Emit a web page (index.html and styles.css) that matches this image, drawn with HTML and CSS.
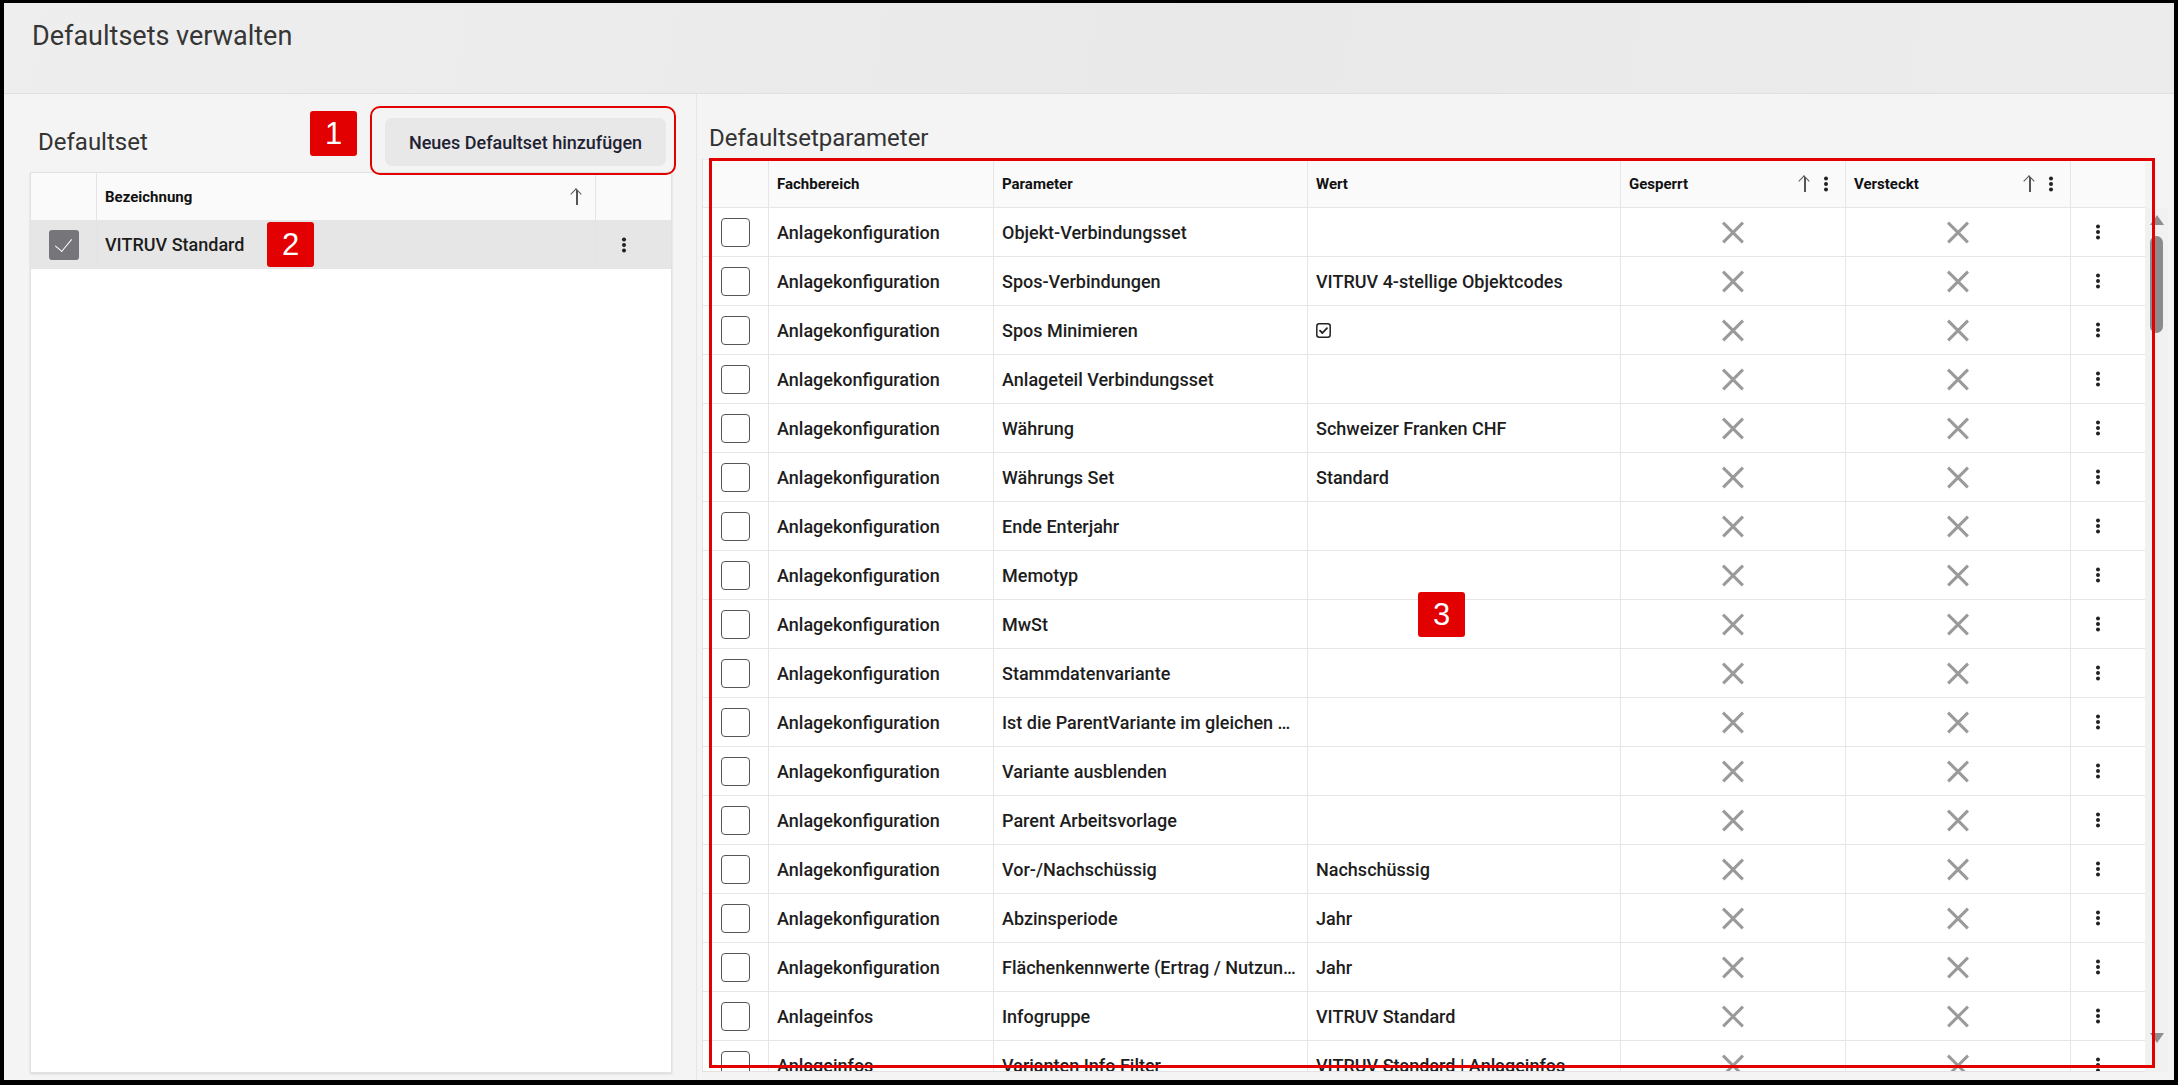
FILE: index.html
```html
<!DOCTYPE html>
<html lang="de">

<head>
    <meta charset="UTF-8">
    <meta name="viewport" content="width=device-width, initial-scale=1.0">
    <title>Defaultsets verwalten</title>
    <link rel="stylesheet" href="styles.css">
</head>

<body>
    <div class="app">
        <header class="topbar">
            <h1>Defaultsets verwalten</h1>
        </header>

        <main class="content">
            <!-- linke Seite: Defaultsets -->
            <section class="panel-left">
                <div class="panel-head">
                    <h2>Defaultset</h2>
                    <button class="btn">Neues Defaultset hinzufügen</button>
                </div>
                <div class="sets">
                    <div class="sets-row sets-head">
                        <div class="scell"></div>
                        <div class="scell">Bezeichnung <span class="sort"></span></div>
                        <div class="scell"></div>
                    </div>
                    <div class="sets-row selected">
                        <div class="scell c-check"><span class="box checked"></span></div>
                        <div class="scell name">VITRUV Standard</div>
                        <div class="scell c-menu"><span class="kebab"></span></div>
                    </div>
                </div>
            </section>

            <!-- rechte Seite: Parameter -->
            <section class="panel-right">
                <h2>Defaultsetparameter</h2>
                <div class="params">
                    <div class="prow params-head">
                        <div class="pcell"></div>
                        <div class="pcell">Fachbereich</div>
                        <div class="pcell">Parameter</div>
                        <div class="pcell">Wert</div>
                        <div class="pcell">Gesperrt <span class="head-tools"><span class="sort"></span><span class="kebab"></span></span></div>
                        <div class="pcell">Versteckt <span class="head-tools"><span class="sort"></span><span class="kebab"></span></span></div>
                        <div class="pcell"></div>
                    </div>
                    <div class="params-body">
                        <div class="params-rows">
                            <div class="prow">
                                <div class="pcell c-check"><span class="box"></span></div>
                                <div class="pcell">Anlagekonfiguration</div>
                                <div class="pcell">Objekt-Verbindungsset</div>
                                <div class="pcell"></div>
                                <div class="pcell c-icon"><span class="cross"></span></div>
                                <div class="pcell c-icon"><span class="cross"></span></div>
                                <div class="pcell c-menu"><span class="kebab"></span></div>
                            </div>
                            <div class="prow">
                                <div class="pcell c-check"><span class="box"></span></div>
                                <div class="pcell">Anlagekonfiguration</div>
                                <div class="pcell">Spos-Verbindungen</div>
                                <div class="pcell">VITRUV 4-stellige Objektcodes</div>
                                <div class="pcell c-icon"><span class="cross"></span></div>
                                <div class="pcell c-icon"><span class="cross"></span></div>
                                <div class="pcell c-menu"><span class="kebab"></span></div>
                            </div>
                            <div class="prow">
                                <div class="pcell c-check"><span class="box"></span></div>
                                <div class="pcell">Anlagekonfiguration</div>
                                <div class="pcell">Spos Minimieren</div>
                                <div class="pcell">
                                    <svg class="mini-check" viewBox="0 0 15 15">
                                        <rect x="0.8" y="0.8" width="13.4" height="13.4" rx="2.5" />
                                        <path d="M4 7.6l2.4 2.4 4.6-4.8" />
                                    </svg>
                                </div>
                                <div class="pcell c-icon"><span class="cross"></span></div>
                                <div class="pcell c-icon"><span class="cross"></span></div>
                                <div class="pcell c-menu"><span class="kebab"></span></div>
                            </div>
                            <div class="prow">
                                <div class="pcell c-check"><span class="box"></span></div>
                                <div class="pcell">Anlagekonfiguration</div>
                                <div class="pcell">Anlageteil Verbindungsset</div>
                                <div class="pcell"></div>
                                <div class="pcell c-icon"><span class="cross"></span></div>
                                <div class="pcell c-icon"><span class="cross"></span></div>
                                <div class="pcell c-menu"><span class="kebab"></span></div>
                            </div>
                            <div class="prow">
                                <div class="pcell c-check"><span class="box"></span></div>
                                <div class="pcell">Anlagekonfiguration</div>
                                <div class="pcell">Währung</div>
                                <div class="pcell">Schweizer Franken CHF</div>
                                <div class="pcell c-icon"><span class="cross"></span></div>
                                <div class="pcell c-icon"><span class="cross"></span></div>
                                <div class="pcell c-menu"><span class="kebab"></span></div>
                            </div>
                            <div class="prow">
                                <div class="pcell c-check"><span class="box"></span></div>
                                <div class="pcell">Anlagekonfiguration</div>
                                <div class="pcell">Währungs Set</div>
                                <div class="pcell">Standard</div>
                                <div class="pcell c-icon"><span class="cross"></span></div>
                                <div class="pcell c-icon"><span class="cross"></span></div>
                                <div class="pcell c-menu"><span class="kebab"></span></div>
                            </div>
                            <div class="prow">
                                <div class="pcell c-check"><span class="box"></span></div>
                                <div class="pcell">Anlagekonfiguration</div>
                                <div class="pcell">Ende Enterjahr</div>
                                <div class="pcell"></div>
                                <div class="pcell c-icon"><span class="cross"></span></div>
                                <div class="pcell c-icon"><span class="cross"></span></div>
                                <div class="pcell c-menu"><span class="kebab"></span></div>
                            </div>
                            <div class="prow">
                                <div class="pcell c-check"><span class="box"></span></div>
                                <div class="pcell">Anlagekonfiguration</div>
                                <div class="pcell">Memotyp</div>
                                <div class="pcell"></div>
                                <div class="pcell c-icon"><span class="cross"></span></div>
                                <div class="pcell c-icon"><span class="cross"></span></div>
                                <div class="pcell c-menu"><span class="kebab"></span></div>
                            </div>
                            <div class="prow">
                                <div class="pcell c-check"><span class="box"></span></div>
                                <div class="pcell">Anlagekonfiguration</div>
                                <div class="pcell">MwSt</div>
                                <div class="pcell"></div>
                                <div class="pcell c-icon"><span class="cross"></span></div>
                                <div class="pcell c-icon"><span class="cross"></span></div>
                                <div class="pcell c-menu"><span class="kebab"></span></div>
                            </div>
                            <div class="prow">
                                <div class="pcell c-check"><span class="box"></span></div>
                                <div class="pcell">Anlagekonfiguration</div>
                                <div class="pcell">Stammdatenvariante</div>
                                <div class="pcell"></div>
                                <div class="pcell c-icon"><span class="cross"></span></div>
                                <div class="pcell c-icon"><span class="cross"></span></div>
                                <div class="pcell c-menu"><span class="kebab"></span></div>
                            </div>
                            <div class="prow">
                                <div class="pcell c-check"><span class="box"></span></div>
                                <div class="pcell">Anlagekonfiguration</div>
                                <div class="pcell"><span class="clip">Ist die ParentVariante im gleichen …</span></div>
                                <div class="pcell"></div>
                                <div class="pcell c-icon"><span class="cross"></span></div>
                                <div class="pcell c-icon"><span class="cross"></span></div>
                                <div class="pcell c-menu"><span class="kebab"></span></div>
                            </div>
                            <div class="prow">
                                <div class="pcell c-check"><span class="box"></span></div>
                                <div class="pcell">Anlagekonfiguration</div>
                                <div class="pcell">Variante ausblenden</div>
                                <div class="pcell"></div>
                                <div class="pcell c-icon"><span class="cross"></span></div>
                                <div class="pcell c-icon"><span class="cross"></span></div>
                                <div class="pcell c-menu"><span class="kebab"></span></div>
                            </div>
                            <div class="prow">
                                <div class="pcell c-check"><span class="box"></span></div>
                                <div class="pcell">Anlagekonfiguration</div>
                                <div class="pcell">Parent Arbeitsvorlage</div>
                                <div class="pcell"></div>
                                <div class="pcell c-icon"><span class="cross"></span></div>
                                <div class="pcell c-icon"><span class="cross"></span></div>
                                <div class="pcell c-menu"><span class="kebab"></span></div>
                            </div>
                            <div class="prow">
                                <div class="pcell c-check"><span class="box"></span></div>
                                <div class="pcell">Anlagekonfiguration</div>
                                <div class="pcell">Vor-/Nachschüssig</div>
                                <div class="pcell">Nachschüssig</div>
                                <div class="pcell c-icon"><span class="cross"></span></div>
                                <div class="pcell c-icon"><span class="cross"></span></div>
                                <div class="pcell c-menu"><span class="kebab"></span></div>
                            </div>
                            <div class="prow">
                                <div class="pcell c-check"><span class="box"></span></div>
                                <div class="pcell">Anlagekonfiguration</div>
                                <div class="pcell">Abzinsperiode</div>
                                <div class="pcell">Jahr</div>
                                <div class="pcell c-icon"><span class="cross"></span></div>
                                <div class="pcell c-icon"><span class="cross"></span></div>
                                <div class="pcell c-menu"><span class="kebab"></span></div>
                            </div>
                            <div class="prow">
                                <div class="pcell c-check"><span class="box"></span></div>
                                <div class="pcell">Anlagekonfiguration</div>
                                <div class="pcell"><span class="clip">Flächenkennwerte (Ertrag / Nutzun…</span></div>
                                <div class="pcell">Jahr</div>
                                <div class="pcell c-icon"><span class="cross"></span></div>
                                <div class="pcell c-icon"><span class="cross"></span></div>
                                <div class="pcell c-menu"><span class="kebab"></span></div>
                            </div>
                            <div class="prow">
                                <div class="pcell c-check"><span class="box"></span></div>
                                <div class="pcell">Anlageinfos</div>
                                <div class="pcell">Infogruppe</div>
                                <div class="pcell">VITRUV Standard</div>
                                <div class="pcell c-icon"><span class="cross"></span></div>
                                <div class="pcell c-icon"><span class="cross"></span></div>
                                <div class="pcell c-menu"><span class="kebab"></span></div>
                            </div>
                            <div class="prow">
                                <div class="pcell c-check"><span class="box"></span></div>
                                <div class="pcell">Anlageinfos</div>
                                <div class="pcell">Varianten Info Filter</div>
                                <div class="pcell">VITRUV Standard | Anlageinfos</div>
                                <div class="pcell c-icon"><span class="cross"></span></div>
                                <div class="pcell c-icon"><span class="cross"></span></div>
                                <div class="pcell c-menu"><span class="kebab"></span></div>
                            </div>
                        </div>
                        <div class="scrollbar">
                            <span class="arrow-up"></span>
                            <span class="thumb"></span>
                            <span class="arrow-down"></span>
                        </div>
                    </div>
                </div>
            </section>
        </main>

        <!-- Markierungen (Anleitung) -->
        <div class="mark-frame frame-1"></div>
        <div class="mark-frame frame-3"></div>
        <span class="marker m1">1</span>
        <span class="marker m2">2</span>
        <span class="marker m3">3</span>
    </div>
</body>

</html>
```
FILE: styles.css
```css
* {
    margin: 0;
    padding: 0;
    box-sizing: border-box;
}

body {
    background-color: #000;
    font-family: Roboto, "Noto Sans", sans-serif;
    color: #1d1d1d;
}

.app {
    position: relative;
    margin: 3px 4px 5px 4px;
    height: 1077px;
    background-color: #f4f4f4;
    display: flex;
    flex-direction: column;
    overflow: hidden;
}

.topbar {
    flex: none;
    height: 91px;
    padding: 17px 28px 0;
    background: linear-gradient(100deg, #eeeeee 0%, #e9e9e9 55%, #ececec 100%);
    border-bottom: 1px solid #e0e0e0;
}

.topbar h1 {
    font-size: 27px;
    font-weight: 400;
    line-height: 32px;
    color: #363636;
}

.content {
    flex: 1;
    display: flex;
    min-height: 0;
}

h2 {
    font-size: 24px;
    font-weight: 400;
    line-height: 28px;
    color: #333;
}

/* linke Seite */
.panel-left {
    flex: none;
    width: 693px;
    padding: 0 24px 7px 26px;
    border-right: 1px solid #e6e6e6;
    display: flex;
    flex-direction: column;
}

.panel-head {
    display: flex;
    align-items: center;
    justify-content: space-between;
    padding: 24px 6px 6px 8px;
}

.btn {
    height: 48px;
    width: 281px;
    border: none;
    border-radius: 7px;
    background-color: #e8e8e9;
    color: #1e2233;
    font-family: Roboto, sans-serif;
    font-size: 18px;
    font-weight: 500;
}

.sets {
    flex: 1;
    background-color: #fff;
    border: 1px solid #e2e2e2;
    box-shadow: 0 1px 2px rgba(0, 0, 0, 0.12);
}

.sets-row {
    display: grid;
    grid-template-columns: 66px 499px 1fr;
    height: 48px;
    border-bottom: 1px solid #e6e6e6;
}

.sets-head {
    background-color: #fafafa;
}

.sets-row.selected {
    background-color: #e6e6e6;
}

.scell {
    display: flex;
    align-items: center;
    padding: 0 8px;
    border-right: 1px solid #e4e4e4;
    font-size: 18px;
    font-weight: 500;
}

.scell:last-child {
    border-right: none;
}

.sets-head .scell {
    font-size: 15px;
    font-weight: 700;
    color: #111;
    padding-right: 11px;
}

.sets-head .sort {
    margin-left: auto;
}

/* rechte Seite */
.panel-right {
    flex: 1;
    padding: 30px 6px 8px 5px;
    display: flex;
    flex-direction: column;
    min-width: 0;
}

.panel-right h2 {
    margin: 0 0 7px 7px;
}

.params {
    flex: 1;
    display: flex;
    flex-direction: column;
    min-height: 0;
}

.prow {
    display: grid;
    grid-template-columns: 66px 225px 314px 313px 225px 225px 74px;
    height: 49px;
    border-bottom: 1px solid #e6e6e6;
}

.params-head {
    width: 1443px;
    background-color: #fafafa;
    border-left: 1px solid #e2e2e2;
    border-top: 1px solid #ececec;
}

.params-body {
    flex: 1;
    display: flex;
    min-height: 0;
}

.params-rows {
    width: 1443px;
    flex: none;
    overflow: hidden;
    background-color: #fff;
    border-left: 1px solid #e2e2e2;
    border-bottom: 1px solid #e2e2e2;
}

.pcell {
    display: flex;
    align-items: center;
    padding: 0 8px;
    border-right: 1px solid #e6e6e6;
    font-size: 18px;
    font-weight: 500;
    white-space: nowrap;
    overflow: hidden;
}

.pcell:last-child {
    border-right: none;
}

.params-head .pcell {
    font-size: 15px;
    font-weight: 700;
    color: #111;
}

.head-tools {
    margin-left: auto;
    padding-right: 9px;
    display: flex;
    align-items: center;
    gap: 12px;
}

.clip {
    overflow: hidden;
    text-overflow: ellipsis;
}

.c-check {
    justify-content: center;
}

.c-icon {
    justify-content: center;
}

.c-menu {
    justify-content: center;
    padding-right: 28px;
}

/* Bausteine */
.box {
    width: 29px;
    height: 29px;
    border: 1.5px solid #555;
    border-radius: 4px;
    background-color: #fff;
}

.box.checked {
    position: relative;
    width: 30px;
    height: 30px;
    border: none;
    border-radius: 3px;
    background-color: #76767a;
}

.box.checked::after {
    content: "";
    position: absolute;
    left: 10px;
    top: 5px;
    width: 8px;
    height: 15px;
    border-right: 1.5px solid #fff;
    border-bottom: 1.5px solid #fff;
    transform: rotate(40deg);
}

.mini-check {
    width: 15px;
    height: 15px;
    fill: none;
    stroke: #222;
    stroke-width: 1.5;
}

.mini-check path {
    stroke-width: 1.8;
    stroke-linecap: round;
    stroke-linejoin: round;
}

.cross {
    position: relative;
    width: 22px;
    height: 22px;
}

.cross::before,
.cross::after {
    content: "";
    position: absolute;
    left: -3px;
    top: 9.6px;
    width: 28px;
    height: 2.8px;
    background-color: #9a9a9a;
    transform: rotate(45deg);
}

.cross::after {
    transform: rotate(-45deg);
}

.kebab {
    width: 4px;
    height: 4px;
    border-radius: 50%;
    background-color: #222;
    box-shadow: 0 -5.5px 0 #222, 0 5.5px 0 #222;
}

.sort {
    position: relative;
    width: 14px;
    height: 16px;
}

.sort::before {
    content: "";
    position: absolute;
    left: 6px;
    top: 1px;
    width: 1.6px;
    height: 15px;
    background-color: #555;
}

.sort::after {
    content: "";
    position: absolute;
    left: 2.3px;
    top: 1.8px;
    width: 7px;
    height: 7px;
    border-left: 1.6px solid #555;
    border-top: 1.6px solid #555;
    transform: rotate(45deg);
}

/* Scrollbar */
.scrollbar {
    width: 23px;
    flex: none;
    background-color: #f1f1f1;
    display: flex;
    flex-direction: column;
    align-items: center;
    padding: 7px 0 29px;
}

.arrow-up,
.arrow-down {
    width: 0;
    height: 0;
    border-left: 7px solid transparent;
    border-right: 7px solid transparent;
}

.arrow-up {
    border-bottom: 10px solid #8e8e8e;
}

.arrow-down {
    margin-top: auto;
    border-top: 10px solid #8e8e8e;
}

.thumb {
    width: 13px;
    height: 97px;
    margin-top: 11px;
    border-radius: 7px;
    background-color: #8b8b8b;
}

/* Markierungen */
.mark-frame {
    position: absolute;
    border: 2.5px solid #e30000;
}

.frame-1 {
    left: 366px;
    top: 103px;
    width: 306px;
    height: 69px;
    border-radius: 10px;
}

.frame-3 {
    left: 705px;
    top: 155px;
    width: 1446px;
    height: 910px;
    border-width: 3px;
}

.marker {
    position: absolute;
    width: 47px;
    height: 45px;
    display: flex;
    align-items: center;
    justify-content: center;
    background-color: #e30000;
    color: #fff;
    border-radius: 3px;
    font-family: "Liberation Sans", Arial, sans-serif;
    font-size: 31px;
}

.m1 {
    left: 306px;
    top: 108px;
}

.m2 {
    left: 263px;
    top: 219px;
}

.m3 {
    left: 1414px;
    top: 589px;
}
```
